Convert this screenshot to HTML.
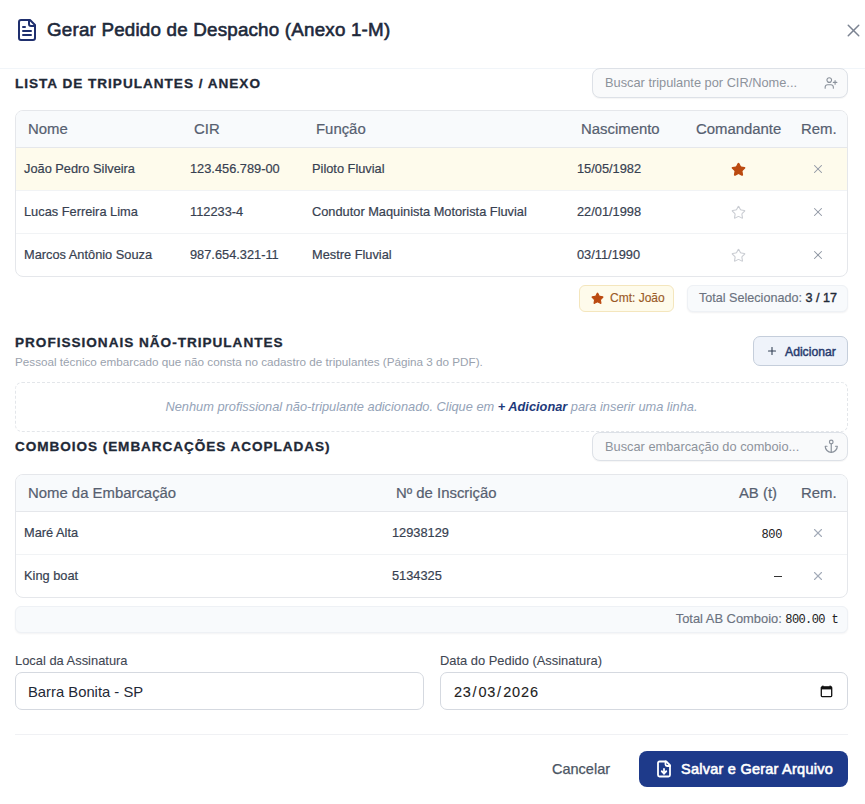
<!DOCTYPE html>
<html><head><meta charset="utf-8">
<style>
*{box-sizing:border-box;margin:0;padding:0}
html,body{width:865px;height:804px;overflow:hidden;background:#fff}
body{font-family:"Liberation Sans",sans-serif;color:#1e293b;position:relative}
.abs{position:absolute}
.hdr-line{position:absolute;left:0;top:68px;width:865px;height:1px;background:#f1f5f9}
.title{position:absolute;left:47px;top:17.5px;font-size:18.8px;font-weight:400;-webkit-text-stroke:0.6px #1e293b;letter-spacing:0.2px;color:#1e293b;line-height:24px;white-space:nowrap}
.sec{position:absolute;left:15px;font-size:13.6px;font-weight:700;letter-spacing:0.98px;-webkit-text-stroke:0.3px #1f2937;color:#1f2937;line-height:16px;white-space:nowrap}
.search{position:absolute;left:592px;width:256px;height:29px;border:1px solid #dde1e7;box-shadow:0 1px 1px rgba(0,0,0,.04);border-radius:8px;background:#f9fafb;font-size:12.8px;color:#8d939b;padding-left:12px;line-height:27px;white-space:nowrap}
.search svg{position:absolute;right:9px;top:6px}
.tbl{position:absolute;left:15px;width:833px;border:1px solid #e5e7eb;border-radius:8px;overflow:hidden;background:#fff}
.th{height:37px;background:#f8fafc;border-bottom:1px solid #e5e7eb;position:relative;font-size:14.9px;color:#566070;-webkit-text-stroke:0.2px #566070}
.tr{height:43px;border-bottom:1px solid #f1f3f5;position:relative;font-size:12.8px;color:#374151;-webkit-text-stroke:0.2px #374151}
.tr:last-child{border-bottom:none;height:42px}
.c{position:absolute;top:0;line-height:36px;white-space:nowrap}
.tr .c{line-height:41.5px}
.badge{position:absolute;top:285px;height:27px;border-radius:6px;font-size:12px;line-height:25px;white-space:nowrap}
</style></head><body>

<!-- header -->
<svg class="abs" style="left:15px;top:18px" width="24" height="24" viewBox="0 0 24 24" fill="none" stroke="#1f2f6e" stroke-width="2" stroke-linecap="round" stroke-linejoin="round"><path d="M15 2H6a2 2 0 0 0-2 2v16a2 2 0 0 0 2 2h12a2 2 0 0 0 2-2V7Z"/><path d="M14 2v4a2 2 0 0 0 2 2h4"/><path d="M10 9H8"/><path d="M16 13H8"/><path d="M16 17H8"/></svg>
<div class="title">Gerar Pedido de Despacho (Anexo 1-M)</div>
<svg class="abs" style="left:842.5px;top:19.5px" width="21" height="21" viewBox="0 0 24 24" fill="none" stroke="#7b8391" stroke-width="1.7" stroke-linecap="round"><path d="M18 6 6 18"/><path d="m6 6 12 12"/></svg>
<div class="hdr-line"></div>

<!-- section 1 -->
<div class="sec" style="top:76px">LISTA DE TRIPULANTES / ANEXO</div>
<div class="search" style="top:68px;height:30px;line-height:28px">Buscar tripulante por CIR/Nome...
<svg width="14" height="14" style="top:7px;right:9px" viewBox="0 0 24 24" fill="none" stroke="#8b929c" stroke-width="1.9" stroke-linecap="round" stroke-linejoin="round"><path d="M16 21v-2a4 4 0 0 0-4-4H6a4 4 0 0 0-4 4v2"/><circle cx="9" cy="7" r="4"/><line x1="19" x2="19" y1="8" y2="14"/><line x1="22" x2="16" y1="11" y2="11"/></svg>
</div>

<div class="tbl" style="top:110px;height:167px">
  <div class="th">
    <span class="c" style="left:12px">Nome</span>
    <span class="c" style="left:178px">CIR</span>
    <span class="c" style="left:300px">Função</span>
    <span class="c" style="left:565px">Nascimento</span>
    <span class="c" style="left:680px">Comandante</span>
    <span class="c" style="left:785px">Rem.</span>
  </div>
  <div class="tr" style="background:#fefbec">
    <span class="c" style="left:8px">João Pedro Silveira</span>
    <span class="c" style="left:174px">123.456.789-00</span>
    <span class="c" style="left:296px">Piloto Fluvial</span>
    <span class="c" style="left:561px">15/05/1982</span>
  </div>
  <div class="tr">
    <span class="c" style="left:8px">Lucas Ferreira Lima</span>
    <span class="c" style="left:174px">112233-4</span>
    <span class="c" style="left:296px">Condutor Maquinista Motorista Fluvial</span>
    <span class="c" style="left:561px">22/01/1998</span>
  </div>
  <div class="tr">
    <span class="c" style="left:8px">Marcos Antônio Souza</span>
    <span class="c" style="left:174px">987.654.321-11</span>
    <span class="c" style="left:296px">Mestre Fluvial</span>
    <span class="c" style="left:561px">03/11/1990</span>
  </div>
</div>

<svg class="abs" style="left:730.5px;top:161.5px" width="15" height="15" viewBox="0 0 24 24" fill="#bb4a10" stroke="#bb4a10" stroke-width="2" stroke-linejoin="round"><path d="M11.525 2.295a.53.53 0 0 1 .95 0l2.31 4.679a2.123 2.123 0 0 0 1.595 1.16l5.166.756a.53.53 0 0 1 .294.904l-3.736 3.638a2.123 2.123 0 0 0-.611 1.878l.882 5.14a.53.53 0 0 1-.771.56l-4.618-2.428a2.122 2.122 0 0 0-1.973 0L6.396 21.01a.53.53 0 0 1-.77-.56l.881-5.139a2.122 2.122 0 0 0-.611-1.879L2.16 9.795a.53.53 0 0 1 .294-.906l5.165-.755a2.122 2.122 0 0 0 1.597-1.16z"/></svg>
<svg class="abs" style="left:811px;top:162px" width="14" height="14" viewBox="0 0 24 24" fill="none" stroke="#8f97a3" stroke-width="1.8" stroke-linecap="round"><path d="M18 6 6 18"/><path d="m6 6 12 12"/></svg>
<svg class="abs" style="left:730.5px;top:204.5px" width="15" height="15" viewBox="0 0 24 24" fill="none" stroke="#cacdd3" stroke-width="1.75" stroke-linejoin="round"><path d="M11.525 2.295a.53.53 0 0 1 .95 0l2.31 4.679a2.123 2.123 0 0 0 1.595 1.16l5.166.756a.53.53 0 0 1 .294.904l-3.736 3.638a2.123 2.123 0 0 0-.611 1.878l.882 5.14a.53.53 0 0 1-.771.56l-4.618-2.428a2.122 2.122 0 0 0-1.973 0L6.396 21.01a.53.53 0 0 1-.77-.56l.881-5.139a2.122 2.122 0 0 0-.611-1.879L2.16 9.795a.53.53 0 0 1 .294-.906l5.165-.755a2.122 2.122 0 0 0 1.597-1.16z"/></svg>
<svg class="abs" style="left:811px;top:205px" width="14" height="14" viewBox="0 0 24 24" fill="none" stroke="#8f97a3" stroke-width="1.8" stroke-linecap="round"><path d="M18 6 6 18"/><path d="m6 6 12 12"/></svg>
<svg class="abs" style="left:730.5px;top:247.5px" width="15" height="15" viewBox="0 0 24 24" fill="none" stroke="#cacdd3" stroke-width="1.75" stroke-linejoin="round"><path d="M11.525 2.295a.53.53 0 0 1 .95 0l2.31 4.679a2.123 2.123 0 0 0 1.595 1.16l5.166.756a.53.53 0 0 1 .294.904l-3.736 3.638a2.123 2.123 0 0 0-.611 1.878l.882 5.14a.53.53 0 0 1-.771.56l-4.618-2.428a2.122 2.122 0 0 0-1.973 0L6.396 21.01a.53.53 0 0 1-.77-.56l.881-5.139a2.122 2.122 0 0 0-.611-1.879L2.16 9.795a.53.53 0 0 1 .294-.906l5.165-.755a2.122 2.122 0 0 0 1.597-1.16z"/></svg>
<svg class="abs" style="left:811px;top:248px" width="14" height="14" viewBox="0 0 24 24" fill="none" stroke="#8f97a3" stroke-width="1.8" stroke-linecap="round"><path d="M18 6 6 18"/><path d="m6 6 12 12"/></svg>

<!-- badges -->
<div class="badge" style="left:579px;width:95px;background:#fefbeb;border:1px solid #f4e6bd;color:#9a5a26">
<svg class="abs" style="left:10.5px;top:5.5px" width="13" height="13" viewBox="0 0 24 24" fill="#bb4a10" stroke="#bb4a10" stroke-width="2" stroke-linejoin="round"><path d="M11.525 2.295a.53.53 0 0 1 .95 0l2.31 4.679a2.123 2.123 0 0 0 1.595 1.16l5.166.756a.53.53 0 0 1 .294.904l-3.736 3.638a2.123 2.123 0 0 0-.611 1.878l.882 5.14a.53.53 0 0 1-.771.56l-4.618-2.428a2.122 2.122 0 0 0-1.973 0L6.396 21.01a.53.53 0 0 1-.77-.56l.881-5.139a2.122 2.122 0 0 0-.611-1.879L2.16 9.795a.53.53 0 0 1 .294-.906l5.165-.755a2.122 2.122 0 0 0 1.597-1.16z"/></svg>
<span class="abs" style="left:30px;top:0;-webkit-text-stroke:0.15px #9a5a26">Cmt: João</span></div>
<div class="badge" style="left:687px;width:161px;background:#f8fafc;border:1px solid #eef1f5;box-shadow:0 1px 2px rgba(15,23,42,.06);color:#6b7280">
<span class="abs" style="left:11px;top:0;font-size:12.6px;-webkit-text-stroke:0.15px #6b7280">Total Selecionado: <b style="color:#1f2937;font-weight:400;-webkit-text-stroke:0.38px #1f2937">3 / 17</b></span></div>

<!-- section 2 -->
<div class="sec" style="top:335px">PROFISSIONAIS NÃO-TRIPULANTES</div>
<div class="abs" style="left:15px;top:355px;font-size:11.7px;color:#9aa2ae;white-space:nowrap;line-height:14px">Pessoal técnico embarcado que não consta no cadastro de tripulantes (Página 3 do PDF).</div>
<div class="abs" style="left:753px;top:336px;width:95px;height:30px;border:1px solid #c5cedb;border-radius:7px;background:#eff3fa;font-size:12.2px;font-weight:400;-webkit-text-stroke:0.45px #283b6e;color:#283b6e;white-space:nowrap">
<svg class="abs" style="left:12px;top:8px" width="12" height="12" viewBox="0 0 24 24" fill="none" stroke="#334155" stroke-width="2.2" stroke-linecap="round"><path d="M5 12h14"/><path d="M12 5v14"/></svg>
<span class="abs" style="left:31px;top:7.5px;line-height:14px">Adicionar</span></div>
<div class="abs" style="left:15px;top:382px;width:833px;height:50px;border:1px dashed #e3e6ea;border-radius:7px;background:#fff;text-align:center;font-size:12.8px;font-style:italic;color:#94a3b8;line-height:48px;white-space:nowrap">Nenhum profissional não-tripulante adicionado. Clique em <b style="color:#1e3a7a">+ Adicionar</b> para inserir uma linha.</div>

<!-- section 3 -->
<div class="sec" style="top:439px;letter-spacing:0.93px">COMBOIOS (EMBARCAÇÕES ACOPLADAS)</div>
<div class="search" style="top:432px">Buscar embarcação do comboio...
<svg width="14.5" height="14.5" style="top:6px;right:9px" viewBox="0 0 24 24" fill="none" stroke="#8b929c" stroke-width="2" stroke-linecap="round" stroke-linejoin="round"><path d="M12 22V8"/><path d="M5 12H2a10 10 0 0 0 20 0h-3"/><circle cx="12" cy="5" r="3"/></svg>
</div>
<div class="tbl" style="top:474px;height:124px">
  <div class="th">
    <span class="c" style="left:12px">Nome da Embarcação</span>
    <span class="c" style="left:380px">Nº de Inscrição</span>
    <span class="c" style="right:70px">AB (t)</span>
    <span class="c" style="left:785px">Rem.</span>
  </div>
  <div class="tr">
    <span class="c" style="left:8px">Maré Alta</span>
    <span class="c" style="left:376px">12938129</span>
    <span class="c" style="right:65px;top:2.5px;font-family:'Liberation Mono',monospace;font-size:12px;letter-spacing:-0.35px;color:#222;-webkit-text-stroke:0.05px #222">800</span>
  </div>
  <div class="tr">
    <span class="c" style="left:8px">King boat</span>
    <span class="c" style="left:376px">5134325</span>
    <span class="abs" style="right:65px;top:20.5px;width:8px;height:1.4px;background:#333"></span>
  </div>
</div>
<svg class="abs" style="left:811px;top:526px" width="14" height="14" viewBox="0 0 24 24" fill="none" stroke="#a3abb8" stroke-width="1.9" stroke-linecap="round"><path d="M18 6 6 18"/><path d="m6 6 12 12"/></svg><svg class="abs" style="left:811px;top:569px" width="14" height="14" viewBox="0 0 24 24" fill="none" stroke="#a3abb8" stroke-width="1.9" stroke-linecap="round"><path d="M18 6 6 18"/><path d="m6 6 12 12"/></svg>
<div class="abs" style="left:15px;top:606px;width:833px;height:27px;background:#f8fafc;border:1px solid #eef1f5;border-radius:6px;box-shadow:0 1px 2px rgba(15,23,42,.05);font-size:12px;color:#6b7280;white-space:nowrap">
<span class="abs" style="right:9px;top:5px;line-height:14px;font-size:12.9px;-webkit-text-stroke:0.15px #6b7280">Total AB Comboio: <span style="position:relative;top:0px;font-family:'Liberation Mono',monospace;font-size:12px;letter-spacing:-0.62px;color:#222;-webkit-text-stroke:0.05px #222">800.00 t</span></span></div>

<!-- form -->
<div class="abs" style="left:15px;top:653.5px;font-size:12.9px;color:#3f4753;-webkit-text-stroke:0.1px #3f4753;line-height:14px;white-space:nowrap">Local da Assinatura</div>
<div class="abs" style="left:440px;top:653.5px;font-size:12.9px;color:#3f4753;-webkit-text-stroke:0.1px #3f4753;line-height:14px;white-space:nowrap">Data do Pedido (Assinatura)</div>
<div class="abs" style="left:15px;top:672px;width:409px;height:38px;border:1px solid #d5d9e0;border-radius:7px;background:#fff;font-size:14.8px;color:#1f2937;padding-left:12px;line-height:38px;white-space:nowrap">Barra Bonita - SP</div>
<div class="abs" style="left:440px;top:672px;width:408px;height:38px;border:1px solid #d5d9e0;border-radius:7px;background:#fff;font-size:14.5px;color:#222;-webkit-text-stroke:0.1px #222;padding-left:13px;line-height:38px;white-space:nowrap"><span style="letter-spacing:0.7px">23</span><span style="margin:0 2px 0 1px">/</span><span style="letter-spacing:0.7px">03</span><span style="margin:0 2px 0 1px">/</span><span style="letter-spacing:0.9px">2026</span>
<svg class="abs" style="left:379px;top:11.5px" width="13" height="13" viewBox="0 0 13 13"><rect x="1.3" y="2" width="10.4" height="9.6" rx="0.8" fill="none" stroke="#111" stroke-width="1.3"/><rect x="1" y="1.8" width="11" height="2.6" fill="#111"/><rect x="2.2" y="0.6" width="1.3" height="1.6" fill="#111"/><rect x="9.5" y="0.6" width="1.3" height="1.6" fill="#111"/></svg></div>
<div class="abs" style="left:15px;top:734px;width:833px;height:1px;background:#f0f1f4"></div>

<!-- footer -->
<div class="abs" style="left:552px;top:761px;font-size:14.5px;color:#4b5563;-webkit-text-stroke:0.25px #4b5563;line-height:16px;white-space:nowrap">Cancelar</div>
<div class="abs" style="left:639px;top:751px;width:209px;height:36px;border-radius:8px;background:#1e3a8a;color:#fff;font-size:14.5px;letter-spacing:0.24px;font-weight:400;-webkit-text-stroke:0.6px #fff;white-space:nowrap">
<svg class="abs" style="left:16px;top:9px" width="18" height="18" viewBox="0 0 24 24" fill="none" stroke="#fff" stroke-width="2.4" stroke-linecap="round" stroke-linejoin="round"><path d="M15 2H6a2 2 0 0 0-2 2v16a2 2 0 0 0 2 2h12a2 2 0 0 0 2-2V7Z"/><path d="M14 2v4a2 2 0 0 0 2 2h4"/><path d="M12 18v-6"/><path d="m9 15 3 3 3-3"/></svg>
<span class="abs" style="left:42px;top:10px;line-height:16px">Salvar e Gerar Arquivo</span></div>

</body></html>
